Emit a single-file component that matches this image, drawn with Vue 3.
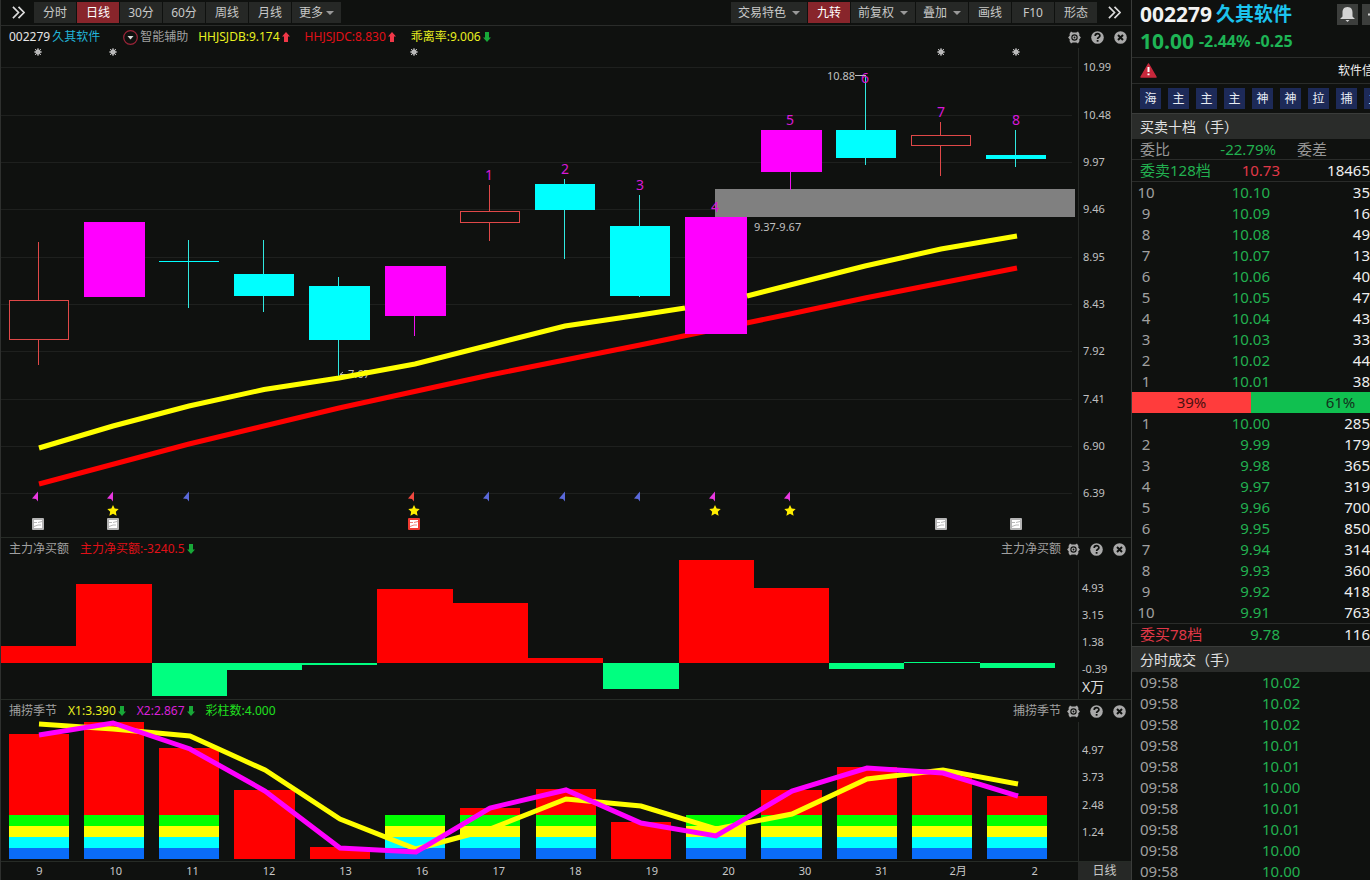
<script setup>
const periods = ['分时', '日线', '30分', '60分', '周线', '月线']
const tools = [
  { label: '交易特色', menu: true },
  { label: '九转', on: true },
  { label: '前复权', menu: true },
  { label: '叠加', menu: true },
  { label: '画线' },
  { label: 'F10' },
  { label: '形态' },
]

const priceTicks = [
  ['10.99', 67], ['10.48', 115], ['9.97', 162], ['9.46', 209], ['8.95', 257],
  ['8.43', 304], ['7.92', 351], ['7.41', 399], ['6.90', 446], ['6.39', 493],
]
// x, width, body top, body bottom, wick top, wick bottom, kind
const candles = [
  [9, 60, 300, 340, 242, 365, 'up'],
  [84, 61, 222, 297, 222, 297, 'limit'],
  [159, 60, 261, 262, 240, 308, 'down'],
  [234, 60, 274, 296, 240, 312, 'down'],
  [309, 61, 286, 340, 277, 376, 'down'],
  [385, 61, 266, 316, 266, 336, 'limit'],
  [460, 60, 211, 223, 185, 241, 'up'],
  [535, 60, 184, 210, 179, 259, 'down'],
  [610, 60, 226, 296, 195, 297, 'down'],
  [685, 62, 217, 334, 217, 334, 'limit'],
  [761, 61, 130, 172, 130, 190, 'limit'],
  [836, 60, 130, 158, 77, 165, 'down'],
  [911, 60, 135, 146, 122, 176, 'up'],
  [986, 60, 155, 159, 130, 167, 'down'],
]
const turns = [
  [1, 489, 180], [2, 565, 174], [3, 640, 190], [4, 715, 212],
  [5, 790, 125], [6, 865, 83], [7, 941, 117], [8, 1016, 125],
]
const suns = [38, 113, 414, 941, 1016]
const flags = [
  [38, 'm'], [113, 'm'], [189, 'b'], [414, 'r'], [489, 'b'],
  [565, 'b'], [640, 'b'], [715, 'm'], [790, 'm'],
]
const stars = [113, 414, 715, 790]
const notes = [[38, 0], [113, 0], [414, 1], [941, 0], [1016, 0]]

const netTicks = [['4.93', 588], ['3.15', 615], ['1.38', 642], ['-0.39', 669]]
const net = [
  [1, 75, 646], [76, 76, 584], [152, 75, 696], [227, 75, 670], [302, 75, 665],
  [377, 76, 589], [453, 75, 603], [528, 75, 658], [603, 76, 689], [679, 75, 560],
  [754, 75, 588], [829, 75, 669], [904, 76, 662], [980, 75, 668],
]
const seasonTicks = [['4.97', 750], ['3.73', 777], ['2.48', 805], ['1.24', 832]]
// x, width, top of bar, whether the coloured layers are stacked under it
const season = [
  [9, 60, 734, 1], [84, 60, 722, 1], [159, 60, 748, 1], [234, 61, 790, 0],
  [310, 60, 847, 0], [385, 60, 815, 1], [460, 60, 808, 1], [536, 60, 789, 1],
  [611, 60, 822, 0], [686, 60, 815, 1], [761, 61, 790, 1], [837, 60, 767, 1],
  [912, 60, 773, 1], [987, 60, 796, 1],
]
const layers = [[815, '#00ff00'], [826, '#ffff00'], [837, '#00ffff'], [848, '#0a6cf8']]
const dates = ['9', '10', '11', '12', '13', '16', '17', '18', '19', '20', '30', '31', '2月', '2']

const tags = ['海', '主', '主', '主', '神', '神', '拉', '捕', '主']
const asks = [
  [10, '10.10', '35'], [9, '10.09', '16'], [8, '10.08', '49'], [7, '10.07', '13'],
  [6, '10.06', '40'], [5, '10.05', '47'], [4, '10.04', '43'], [3, '10.03', '33'],
  [2, '10.02', '44'], [1, '10.01', '38'],
]
const bids = [
  [1, '10.00', '285'], [2, '9.99', '179'], [3, '9.98', '365'], [4, '9.97', '319'],
  [5, '9.96', '700'], [6, '9.95', '850'], [7, '9.94', '314'], [8, '9.93', '360'],
  [9, '9.92', '418'], [10, '9.91', '763'],
]
const trades = ['10.02', '10.02', '10.02', '10.01', '10.01', '10.00', '10.01', '10.01', '10.00', '10.00']
</script>

<template>
  <div class="app">
    <svg class="defs" aria-hidden="true">
      <symbol id="gear" viewBox="0 0 13 13">
        <path fill="#a9a9a9" fill-rule="evenodd" d="M3 0.4 L4.700 1.500 H8.300 L10 0.4 L11.500 3 L11.200 4.400 L12.900 6.500 L11.200 8.600 L11.500 10 L10 12.600 L8.300 11.500 H4.700 L3 12.600 L1.500 10 L1.800 8.600 L0.1 6.500 L1.800 4.400 L1.500 3 Z M6.500 3.300 A3.200 3.200 0 1 0 6.500 9.700 A3.200 3.200 0 1 0 6.500 3.300 Z" />
        <circle cx="6.5" cy="6.5" r="1.5" fill="none" stroke="#a9a9a9" stroke-width="1.2" />
      </symbol>
      <symbol id="help" viewBox="0 0 13 13">
        <circle cx="6.5" cy="6.5" r="6.3" fill="#a9a9a9" />
        <path d="M4.2 5 C4.2 1.9 8.9 1.9 8.9 4.7 C8.9 6.3 6.6 6.2 6.6 8" fill="none" stroke="#0f110f" stroke-width="1.7" />
        <rect x="5.7" y="9" width="1.8" height="1.7" fill="#0f110f" />
      </symbol>
      <symbol id="shut" viewBox="0 0 13 13">
        <circle cx="6.5" cy="6.5" r="6.3" fill="#a9a9a9" />
        <path d="M4 4 L9 9 M9 4 L4 9" stroke="#0f110f" stroke-width="2" />
      </symbol>
      <symbol id="arrow" viewBox="0 0 8 10">
        <path fill="currentColor" d="M4 0 L8 4.5 H6 V10 H2 V4.5 H0 Z" />
      </symbol>
      <symbol id="more" viewBox="0 0 14 14">
        <path d="M1 1 L7 7 L1 13 M7 1 L13 7 L7 13" fill="none" stroke="#dcdcdc" stroke-width="1.8" />
      </symbol>
    </svg>

    <main class="main">
      <nav class="toolbar">
        <button class="chev" aria-label="展开"><svg width="13" height="13"><use href="#more" /></svg></button>
        <div class="tabs">
          <button v-for="p in periods" :key="p" class="tab" :class="{ on: p === '日线' }">{{ p }}</button>
          <button class="tab wide">更多<i class="caret near"></i></button>
        </div>
        <div class="tabs right">
          <button v-for="t in tools" :key="t.label" class="tab" :class="{ on: t.on, drop: t.menu }">{{ t.label }}<i v-if="t.menu" class="caret"></i></button>
        </div>
        <button class="chev end" aria-label="更多"><svg width="13" height="13"><use href="#more" /></svg></button>
      </nav>

      <header class="info top">
        <span class="name">002279<b>久其软件</b></span>
        <span class="smart"><svg width="15" height="15" viewBox="0 0 15 15"><circle cx="7.5" cy="7.5" r="6.8" fill="none" stroke="#9c2438" stroke-width="1.2" /><path d="M4.5 6 H10.5 L7.5 9.5 Z" fill="#ddd" /></svg>智能辅助</span>
        <span class="yellow">HHJSJDB:9.174<svg class="arr rise"><use href="#arrow" /></svg></span>
        <span class="red">HHJSJDC:8.830<svg class="arr rise"><use href="#arrow" /></svg></span>
        <span class="yellow">乖离率:9.006<svg class="arr fall"><use href="#arrow" /></svg></span>
        <span class="acts">
          <button aria-label="设置"><svg><use href="#gear" /></svg></button>
          <button aria-label="帮助"><svg><use href="#help" /></svg></button>
          <button aria-label="关闭"><svg><use href="#shut" /></svg></button>
        </span>
      </header>

      <svg class="chart" viewBox="1 48 1130 489">
        <g class="grid">
          <line v-for="t in priceTicks" :key="t[0]" x1="1" x2="1072" :y1="t[1] + 0.5" :y2="t[1] + 0.5" />
        </g>
        <path class="axis" d="M1078.5 48 V537" />
        <g class="tick"><text v-for="t in priceTicks" :key="t[0]" x="1083" :y="t[1] + 4">{{ t[0] }}</text></g>

        <g v-for="x in suns" :key="x" stroke="#b4b4b4">
          <circle :cx="x" cy="52" r="2.3" fill="#d8d8d8" />
          <path :d="`M${x - 4} 52 H${x + 4} M${x} 48 V56 M${x - 3} 49 L${x + 3} 55 M${x + 3} 49 L${x - 3} 55`" />
        </g>

        <rect x="715" y="189" width="360" height="28" fill="#808080" />
        <polyline class="line" stroke="#ff0000" points="39,484 189,444 339,408 490,375 640,345 790,314 865,298 1017,268" />
        <g class="tick"><text x="348" y="378">7.67</text><path d="M340 374.5 H350 M343 372 L340 374.5 L343 377" fill="none" stroke="#bbb" /></g>
        <g v-for="c in candles" :key="c[0]" :class="c[6]">
          <line :x1="c[0] + 29.5" :x2="c[0] + 29.5" :y1="c[4]" :y2="c[2]" />
          <line :x1="c[0] + 29.5" :x2="c[0] + 29.5" :y1="c[3]" :y2="c[5]" />
          <rect v-if="c[6] === 'up'" class="hollow" :x="c[0] + 0.5" :y="c[2] + 0.5" :width="c[1] - 1" :height="c[3] - c[2] - 1" />
          <rect v-else class="solid" :x="c[0]" :y="c[2]" :width="c[1]" :height="c[3] - c[2]" />
        </g>
        <polyline class="line" stroke="#ffff00" points="39,448 113,426 189,406 264,389.500 339,378 415,364 490,345 565,326 640,315 685,308" />
        <polyline class="line" stroke="#ffff00" points="747,296 790,285 865,266 941,249 1017,236" />

        <g class="turn"><text v-for="t in turns" :key="t[0]" :x="t[1]" :y="t[2]">{{ t[0] }}</text></g>
        <g class="tick">
          <text x="827" y="80">10.88</text><path d="M855 75.500 H866" stroke="#bbb" />
          <text x="754" y="231">9.37-9.67</text>
        </g>
        <path v-for="f in flags" :key="f[0]" :class="'f' + f[1]" :d="`M${f[0]} 491.500 V501.500 L${f[0] - 2} 499 L${f[0] - 6} 498.500 Z`" />
        <path v-for="x in stars" :key="x" fill="#ffee00" :d="`M${x} 505 l1.700 3.600 l4 0.500 l-2.900 2.700 l0.800 4 l-3.600 -2 l-3.600 2 l0.800 -4 l-2.900 -2.700 l4 -0.500 Z`" />
        <g v-for="n in notes" :key="n[0]">
          <rect :x="n[0] - 6" y="518" width="12" height="12" rx="1" :fill="n[1] ? '#f03a30' : '#b4b4b4'" />
          <rect :x="n[0] - 4" y="520" width="8" height="8" fill="#fff" />
          <path :d="`M${n[0] - 4} 522.500 H${n[0] - 1} M${n[0]} 522.500 L${n[0] + 4} 521.500 M${n[0] - 4} 526.500 L${n[0]} 525 H${n[0] + 3}`" fill="none" :stroke="n[1] ? '#f08078' : '#b8b8b8'" />
        </g>
      </svg>

      <header class="info">
        <span class="grey">主力净买额</span>
        <span class="red">主力净买额:-3240.5<svg class="arr fall"><use href="#arrow" /></svg></span>
        <span class="acts">
          <span class="grey">主力净买额</span>
          <button aria-label="设置"><svg><use href="#gear" /></svg></button>
          <button aria-label="帮助"><svg><use href="#help" /></svg></button>
          <button aria-label="关闭"><svg><use href="#shut" /></svg></button>
        </span>
      </header>
      <svg class="chart" viewBox="1 560 1130 139">
        <path class="axis" d="M1078.5 560 V699" />
        <rect v-for="b in net" :key="b[0]" :x="b[0]" :y="Math.min(b[2], 663)" :width="b[1]" :height="Math.abs(663 - b[2])" :fill="b[2] < 662 ? '#ff0000' : '#00ff80'" />
        <g class="tick"><text v-for="t in netTicks" :key="t[0]" x="1082" :y="t[1] + 4">{{ t[0] }}</text></g>
        <text class="unit" x="1082" y="692">X万</text>
      </svg>

      <header class="info">
        <span class="grey">捕捞季节</span>
        <span class="yellow">X1:3.390<svg class="arr fall"><use href="#arrow" /></svg></span>
        <span class="magenta">X2:2.867<svg class="arr fall"><use href="#arrow" /></svg></span>
        <span class="green">彩柱数:4.000</span>
        <span class="acts">
          <span class="grey">捕捞季节</span>
          <button aria-label="设置"><svg><use href="#gear" /></svg></button>
          <button aria-label="帮助"><svg><use href="#help" /></svg></button>
          <button aria-label="关闭"><svg><use href="#shut" /></svg></button>
        </span>
      </header>
      <svg class="chart" viewBox="1 722 1130 139">
        <path class="axis" d="M1078.5 722 V861" />
        <g v-for="b in season" :key="b[0]">
          <rect :x="b[0]" :y="b[2]" :width="b[1]" :height="859 - b[2]" fill="#ff0000" />
          <template v-if="b[3]">
            <rect v-for="l in layers" :key="l[0]" :x="b[0]" :y="l[0]" :width="b[1]" height="11" :fill="l[1]" />
          </template>
        </g>
        <polyline class="line" stroke="#ffff00" points="39,724 113,729 190,736 265,770 340,819 416,849 490,829 566,799 641,806 716,829 792,814 867,779 943,770 1018,784" />
        <polyline class="line" stroke="#ff00ff" points="39,735 113,723 190,749 265,791 340,848 416,852 490,808 566,790 641,823 716,836 792,791 867,768 943,773 1018,796" />
        <g class="tick"><text v-for="t in seasonTicks" :key="t[0]" x="1082" :y="t[1] + 4">{{ t[0] }}</text></g>
      </svg>
      <footer class="dates">
        <div class="days"><span v-for="d in dates" :key="d">{{ d }}</span></div>
        <button class="cycle">日线</button>
      </footer>
    </main>

    <aside class="side">
      <div class="title">
        <strong>002279</strong><strong class="cyan">久其软件</strong>
        <button class="sq" aria-label="提醒"><svg width="17" height="17" viewBox="0 0 17 17"><path fill="#d4d4d4" d="M8.5 1 C4.500 1 3.500 4 3.500 6.500 V10.500 L1 13 H16 L13.500 10.500 V6.500 C13.500 4 12.500 1 8.500 1 Z M6.500 14 H10.500 L8.500 16 Z" /></svg></button>
        <button class="sq" aria-label="减少"><svg width="17" height="17" viewBox="0 0 17 17"><path stroke="#d4d4d4" stroke-width="2" d="M4 8.500 H13" /></svg></button>
      </div>
      <div class="quote"><strong>10.00</strong><b>-2.44%</b><b>-0.25</b></div>
      <div class="alert">
        <svg width="17" height="15" viewBox="0 0 17 15"><path d="M8.500 1 L16 14 H1 Z" fill="#c8283c" stroke="#c8283c" stroke-width="1.500" stroke-linejoin="round" /><path d="M8.500 4 V9 M8.500 10.500 V12.300" stroke="#fff" stroke-width="2" /></svg>
        <span>软件信息</span>
      </div>
      <div class="tags"><button v-for="(t, i) in tags" :key="i">{{ t }}</button></div>
      <h2>买卖十档（手）</h2>
      <div class="row ratio"><span class="c1">委比</span><span class="c2 down">-22.79%</span><span class="c3">委差</span></div>
      <div class="row"><span class="c1 down">委卖128档</span><span class="c2 rise">10.73</span><span class="c4">18465</span></div>
      <table class="book">
        <tbody><tr v-for="r in asks" :key="r[0]"><th scope="row">{{ r[0] }}</th><td class="down">{{ r[1] }}</td><td>{{ r[2] }}</td></tr></tbody>
      </table>
      <div class="split"><span>39%</span><span>61%</span></div>
      <table class="book">
        <tbody><tr v-for="r in bids" :key="r[0]"><th scope="row">{{ r[0] }}</th><td class="down">{{ r[1] }}</td><td>{{ r[2] }}</td></tr></tbody>
      </table>
      <div class="row buy"><span class="c1 rise">委买78档</span><span class="c2 down">9.78</span><span class="c4">116</span></div>
      <h2>分时成交（手）</h2>
      <div class="trades">
        <table>
          <tbody><tr v-for="(t, i) in trades" :key="i"><td>09:58</td><td class="down">{{ t }}</td></tr></tbody>
        </table>
      </div>
    </aside>
  </div>
</template>

<style>
body { background: #0f110f; }
</style>

<style scoped>
.app {
  display: flex;
  height: 100vh;
  overflow: hidden;
  background: #0f110f;
  color: #c8c8c8;
  font: 12px "Noto Sans", "Noto Sans CJK SC", sans-serif;
}
.app * { box-sizing: border-box; }
.defs { position: absolute; width: 0; height: 0; }
button { margin: 0; padding: 0; border: 0; background: none; color: inherit; font: inherit; line-height: 1; }
svg { flex: none; }
.main { flex: 1; min-width: 0; border-left: 1px solid #2e302e; }
.chart { display: block; width: 100%; height: auto; overflow: visible; }

.toolbar { display: flex; height: 26px; padding-top: 2px; border-bottom: 1px solid #2a2c2a; }
.chev { display: flex; align-items: center; width: 33px; height: 21px; padding-left: 11px; }
.chev.end { width: 34px; }
.tabs { display: flex; gap: 1px; }
.tabs.right { margin-left: auto; }
.tab { display: flex; align-items: center; justify-content: center; width: 42px; height: 21px; background: #262826; }
.tab.wide { width: 49px; }
.tab.drop { width: auto; padding: 0 7px; }
.tab.on { background: #88252b; color: #fff; }
.caret { margin-left: 6px; border: 4px solid transparent; border-top-color: #999; border-bottom: 0; }
.caret.near { margin-left: 3px; }

.info { display: flex; align-items: center; gap: 11px; height: 23px; padding: 0 5px 0 8px; border-top: 1px solid #262b26; white-space: nowrap; line-height: 20px; }
.info.top { height: 22px; gap: 15px; border-top: 0; padding-right: 4px; }
.info > span { display: flex; align-items: center; }
.name { color: #e6e6e6; margin-right: 8px; }
.name b { margin-left: 2px; font-weight: 400; color: #22b4d8; }
.smart { color: #a0a0a0; margin-right: -5px; }
.smart svg { margin-right: 2px; }
.grey { color: #a0a0a0; }
.yellow { color: #e8f020; }
.red { color: #e01018; }
.magenta { color: #d820d8; }
.green { color: #20e020; }
.arr { width: 8px; height: 10px; margin-left: 2px; }
.arr.rise { color: #f03848; }
.arr.fall { color: #18a838; rotate: 180deg; }
.info .acts { margin-left: auto; gap: 10px; }
.acts .grey { margin-right: -4px; }
.acts svg { display: block; width: 13px; height: 13px; }

.grid line { stroke: #1e201e; }
.axis { stroke: #262926; fill: none; }
.tick { fill: #c0c0c0; font-size: 11px; }
.unit { fill: #ddd; font-size: 14px; }
.line { fill: none; stroke-width: 5; }
.turn { fill: #d818d8; font-size: 14px; text-anchor: middle; }
.up { stroke: #e04848; }
.hollow { fill: #0f110f; }
.down line { stroke: #30e8e0; }
.down .solid { fill: #00ffff; }
.limit line { stroke: #f010f0; }
.limit .solid { fill: #ff00ff; }
.fm { fill: #e838e0; }
.fb { fill: #5a68d8; }
.fr { fill: #f04840; }

.dates { display: flex; height: 19px; border-top: 1px solid #262b26; font-size: 11px; line-height: 18px; }
.days { flex: 1; display: grid; grid-template-columns: repeat(14, 1fr); padding-right: 5px; text-align: center; }
.cycle { width: 53px; background: #262826; font-size: 12px; }

.side { width: 239px; display: flex; flex-direction: column; overflow: hidden; border-left: 1px solid #3a3c3a; font-size: 15px; line-height: 21px; white-space: nowrap; }
.side > * { flex: none; }
.title { display: flex; align-items: center; height: 29px; padding-left: 8px; font-size: 21px; color: #f2f2f2; }
.title strong { width: 76px; }
.title .cyan { width: auto; flex: 1; font-size: 19px; color: #1cc4ee; }
.sq { display: grid; place-items: center; width: 21px; height: 21px; margin-right: 4px; background: #3c3e3c; }
.sq + .sq { margin-right: -13px; }
.quote { display: flex; align-items: center; gap: 5px; height: 29px; padding: 0 8px 3px; border-bottom: 1px solid #2a2c2a; color: #1eb455; font-size: 16px; }
.quote strong { font-size: 21px; }
.alert { display: flex; align-items: center; justify-content: space-between; height: 26px; padding: 0 0 0 8px; border-bottom: 1px solid #2a2c2a; font-size: 12px; color: #eee; }
.alert span { width: 32px; }
.tags { display: flex; gap: 7px; height: 29px; padding: 4px 8px; }
.tags button { flex: none; width: 21px; height: 21px; background: #1d2a58; color: #e8ecf4; font-size: 12px; }
h2 { height: 26px; margin: 0; padding-left: 8px; border-top: 1px solid #3a3c3a; background: #2a2c2a; color: #e2e2e2; font-size: 14px; font-weight: 400; line-height: 25px; }
.side .down { color: #22b050; }
.side .rise { color: #e03848; }
.row { display: flex; height: 22px; padding-left: 8px; border-bottom: 1px solid #2a2c2a; }
.ratio { height: 21px; color: #969696; }
.c1 { width: 72px; }
.c2 { width: 68px; text-align: right; }
.ratio .c2 { width: 64px; }
.c3 { margin-left: 21px; }
.c4 { flex: 1; text-align: right; color: #eee; }
.buy { height: 23px; border-top: 1px solid #2a2c2a; border-bottom: 0; }
table { width: 100%; border-collapse: collapse; table-layout: fixed; }
tr { height: 21px; }
th, td { padding: 0; font-weight: 400; }
.book th { width: 28px; color: #a0a0a0; }
.book td { text-align: right; color: #eee; }
.book td.down { width: 110px; }
.split { display: flex; height: 21px; background: #10c050; color: #14301c; }
.split span { flex: none; width: 50%; text-align: center; }
.split span:first-child { background: #ff3c3c; color: #4a1010; }
.split span:last-child { padding-left: 60px; }
.side > .trades { flex: 1; min-height: 0; overflow: hidden; color: #a0a0a0; }
.trades td:first-child { padding-left: 8px; width: 100px; }
.trades td:last-child { padding-left: 30px; }
</style>
